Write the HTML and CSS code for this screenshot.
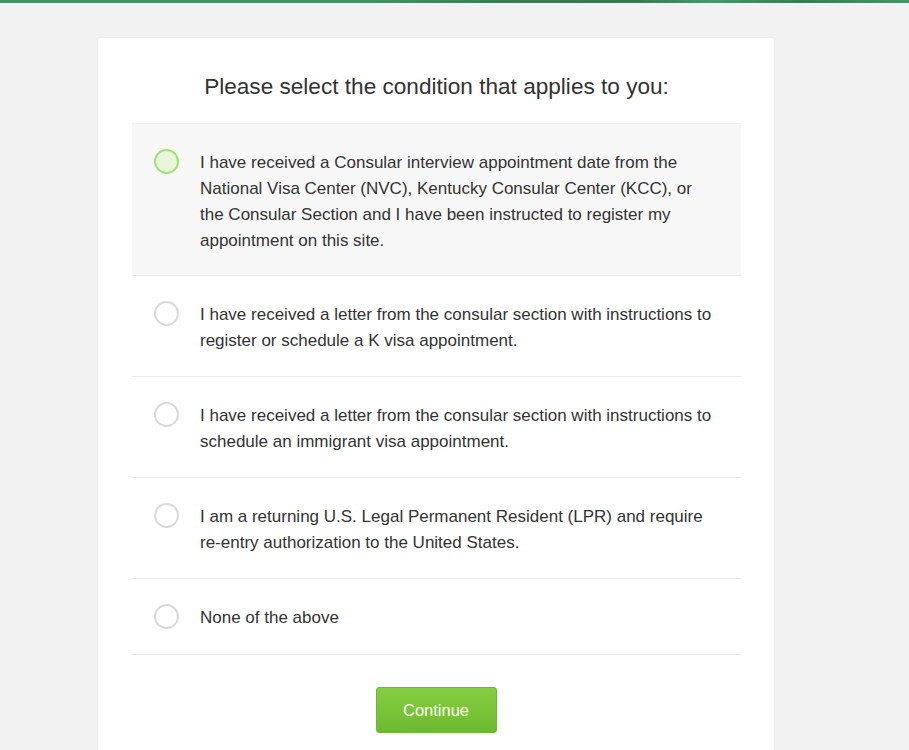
FILE: index.html
```html
<!DOCTYPE html>
<html>
<head>
<meta charset="utf-8">
<link rel="stylesheet" href="styles.css">
</head>
<body>
<div class="topbar"></div>
<main class="page">
  <section class="card">
    <h1 class="title">Please select the condition that applies to you:</h1>
    <ul class="options">
      <li class="option active">
        <span class="radio"></span>
        <span class="label">I have received a Consular interview appointment date from the National Visa Center (NVC), Kentucky Consular Center (KCC), or the Consular Section and I have been instructed to register my appointment on this site.</span>
      </li>
      <li class="option">
        <span class="radio"></span>
        <span class="label">I have received a letter from the consular section with instructions to register or schedule a K visa appointment.</span>
      </li>
      <li class="option">
        <span class="radio"></span>
        <span class="label">I have received a letter from the consular section with instructions to schedule an immigrant visa appointment.</span>
      </li>
      <li class="option">
        <span class="radio"></span>
        <span class="label">I am a returning U.S. Legal Permanent Resident (LPR) and require re&#8209;entry authorization to the United States.</span>
      </li>
      <li class="option">
        <span class="radio"></span>
        <span class="label">None of the above</span>
      </li>
    </ul>
    <div class="actions">
      <button class="btn">Continue</button>
    </div>
  </section>
</main>
</body>
</html>
```

FILE: styles.css
```css
* { box-sizing: border-box; }
html, body { margin: 0; padding: 0; }
body {
  background: #f2f2f2;
  font-family: "Liberation Sans", Arial, sans-serif;
  color: #333;
  height: 750px;
  overflow: hidden;
}
.topbar {
  height: 3px;
  background: linear-gradient(90deg, #46906a 0%, #46906a 40%, #3f7a58 55%, #3e7656 70%, #4a9670 78%, #3f7a58 88%, #48926c 100%);
}
.page {
  padding-top: 35px;
  padding-left: 98px;
}
.card {
  width: 676px;
  min-height: 760px;
  background: #fff;
  border-radius: 3px;
  box-shadow: 0 0 2px rgba(0,0,0,0.06);
  padding: 36px 33px 0 34px;
}
.title {
  margin: 0 0 23px;
  font-size: 22.6px;
  font-weight: normal;
  line-height: 26px;
  text-align: center;
  color: #333;
}
.options {
  list-style: none;
  margin: 0;
  padding: 0;
  border-top: 1px solid #f0f0f0;
}
.option {
  display: flex;
  align-items: flex-start;
  padding: 26px 27px 22px 22px;
  border-bottom: 1px solid #e9e9e9;
  font-size: 17px;
  line-height: 26px;
}
.option:first-child { padding-bottom: 21px; }
.option:last-child { padding-bottom: 23px; }
.option.active { background: #f7f7f7; }
.radio {
  flex: none;
  width: 25px;
  height: 25px;
  margin-top: -1px;
  border: 2px solid #d9d9d9;
  border-radius: 50%;
  background: #fff;
  margin-right: 21px;
}
.option.active .radio {
  border-color: #a3df73;
  background: #e8f7da;
}
.label { flex: 1; color: #333; }
.actions {
  display: flex;
  justify-content: center;
  padding-top: 32px;
  padding-right: 1px;
}
.btn {
  width: 121px;
  height: 46px;
  border: 1px solid #6fb834;
  border-radius: 3px;
  background: linear-gradient(#86ce40, #6db92f);
  color: #fff;
  font-family: "Liberation Sans", Arial, sans-serif;
  font-size: 16.5px;
  cursor: pointer;
}
```
